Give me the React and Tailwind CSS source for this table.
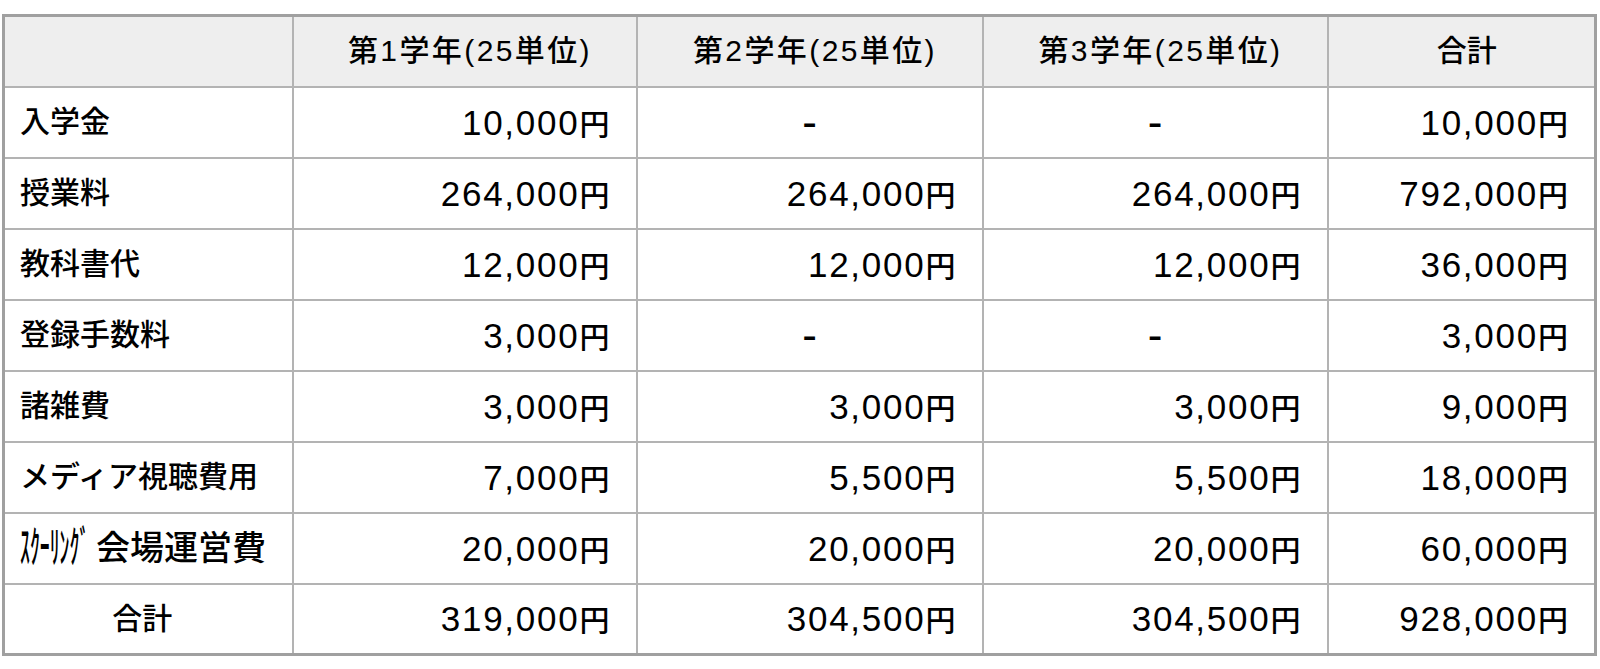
const years = ['第1学年(25単位)', '第2学年(25単位)', '第3学年(25単位)']

const rows = [
  { label: '入学金', values: ['10,000円', '-', '-', '10,000円'] },
  { label: '授業料', values: ['264,000円', '264,000円', '264,000円', '792,000円'] },
  { label: '教科書代', values: ['12,000円', '12,000円', '12,000円', '36,000円'] },
  { label: '登録手数料', values: ['3,000円', '-', '-', '3,000円'] },
  { label: '諸雑費', values: ['3,000円', '3,000円', '3,000円', '9,000円'] },
  { label: 'メディア視聴費用', values: ['7,000円', '5,500円', '5,500円', '18,000円'] },
  { label: 'schooling', values: ['20,000円', '20,000円', '20,000円', '60,000円'] },
]

const totals = ['319,000円', '304,500円', '304,500円', '928,000円']

const cell = 'border-2 border-[#b3b3b3] px-[15px] align-middle'

const Amount = ({ value }) => {
  if (value === '-') {
    return <td className={`${cell} text-center text-[44px]`}>-</td>
  }
  const num = value.replace('円', '')
  return (
    <td className={`${cell} text-right pr-[26px] whitespace-nowrap`}>
      <span className="text-[35px] tracking-[0.05em]">{num}</span>
      <span>円</span>
    </td>
  )
}

const Label = ({ label }) => {
  if (label === 'schooling') {
    return (
      <td className={`${cell} whitespace-nowrap`}>
        {/* half-width kana, squeezed like the original */}
        <span className="inline-block w-[76px] align-middle">
          <span className="inline-block origin-left scale-x-[0.45] text-[44px] whitespace-nowrap">ｽｸｰﾘﾝｸﾞ</span>
        </span>
        <span className="text-[34px] align-middle">会場運営費</span>
      </td>
    )
  }
  return <td className={cell}>{label}</td>
}

const App = () => {
  return (
    <div className="bg-white w-[1600px] h-[669px] pt-[14px] pl-[2px]">
      <table className="table-fixed w-[1595px] border-collapse border-[3px] border-[#a0a0a0] text-[30px] font-medium leading-none text-black font-['Liberation_Sans','Noto_Sans_CJK_JP',sans-serif]">
        <colgroup>
          <col className="w-[289px]" />
          <col className="w-[344px]" />
          <col className="w-[346px]" />
          <col className="w-[345px]" />
          <col className="w-[268px]" />
        </colgroup>
        <thead>
          <tr className="h-[71px] bg-[#eeeeee]">
            <th className={cell}></th>
            {years.map((y) => (
              <th key={y} className={`${cell} font-medium text-center tracking-[0.08em] pl-[26px]`}>{y}</th>
            ))}
            <th className={`${cell} font-medium text-center pl-[26px]`}>合計</th>
          </tr>
        </thead>
        <tbody>
          {rows.map((r) => (
            <tr key={r.label} className="h-[71px]">
              <Label label={r.label} />
              {r.values.map((v, i) => (
                <Amount key={i} value={v} />
              ))}
            </tr>
          ))}
          <tr className="h-[71px]">
            <td className={`${cell} text-center pr-[27px]`}>合計</td>
            {totals.map((v, i) => (
              <Amount key={i} value={v} />
            ))}
          </tr>
        </tbody>
      </table>
    </div>
  )
}

export default App
